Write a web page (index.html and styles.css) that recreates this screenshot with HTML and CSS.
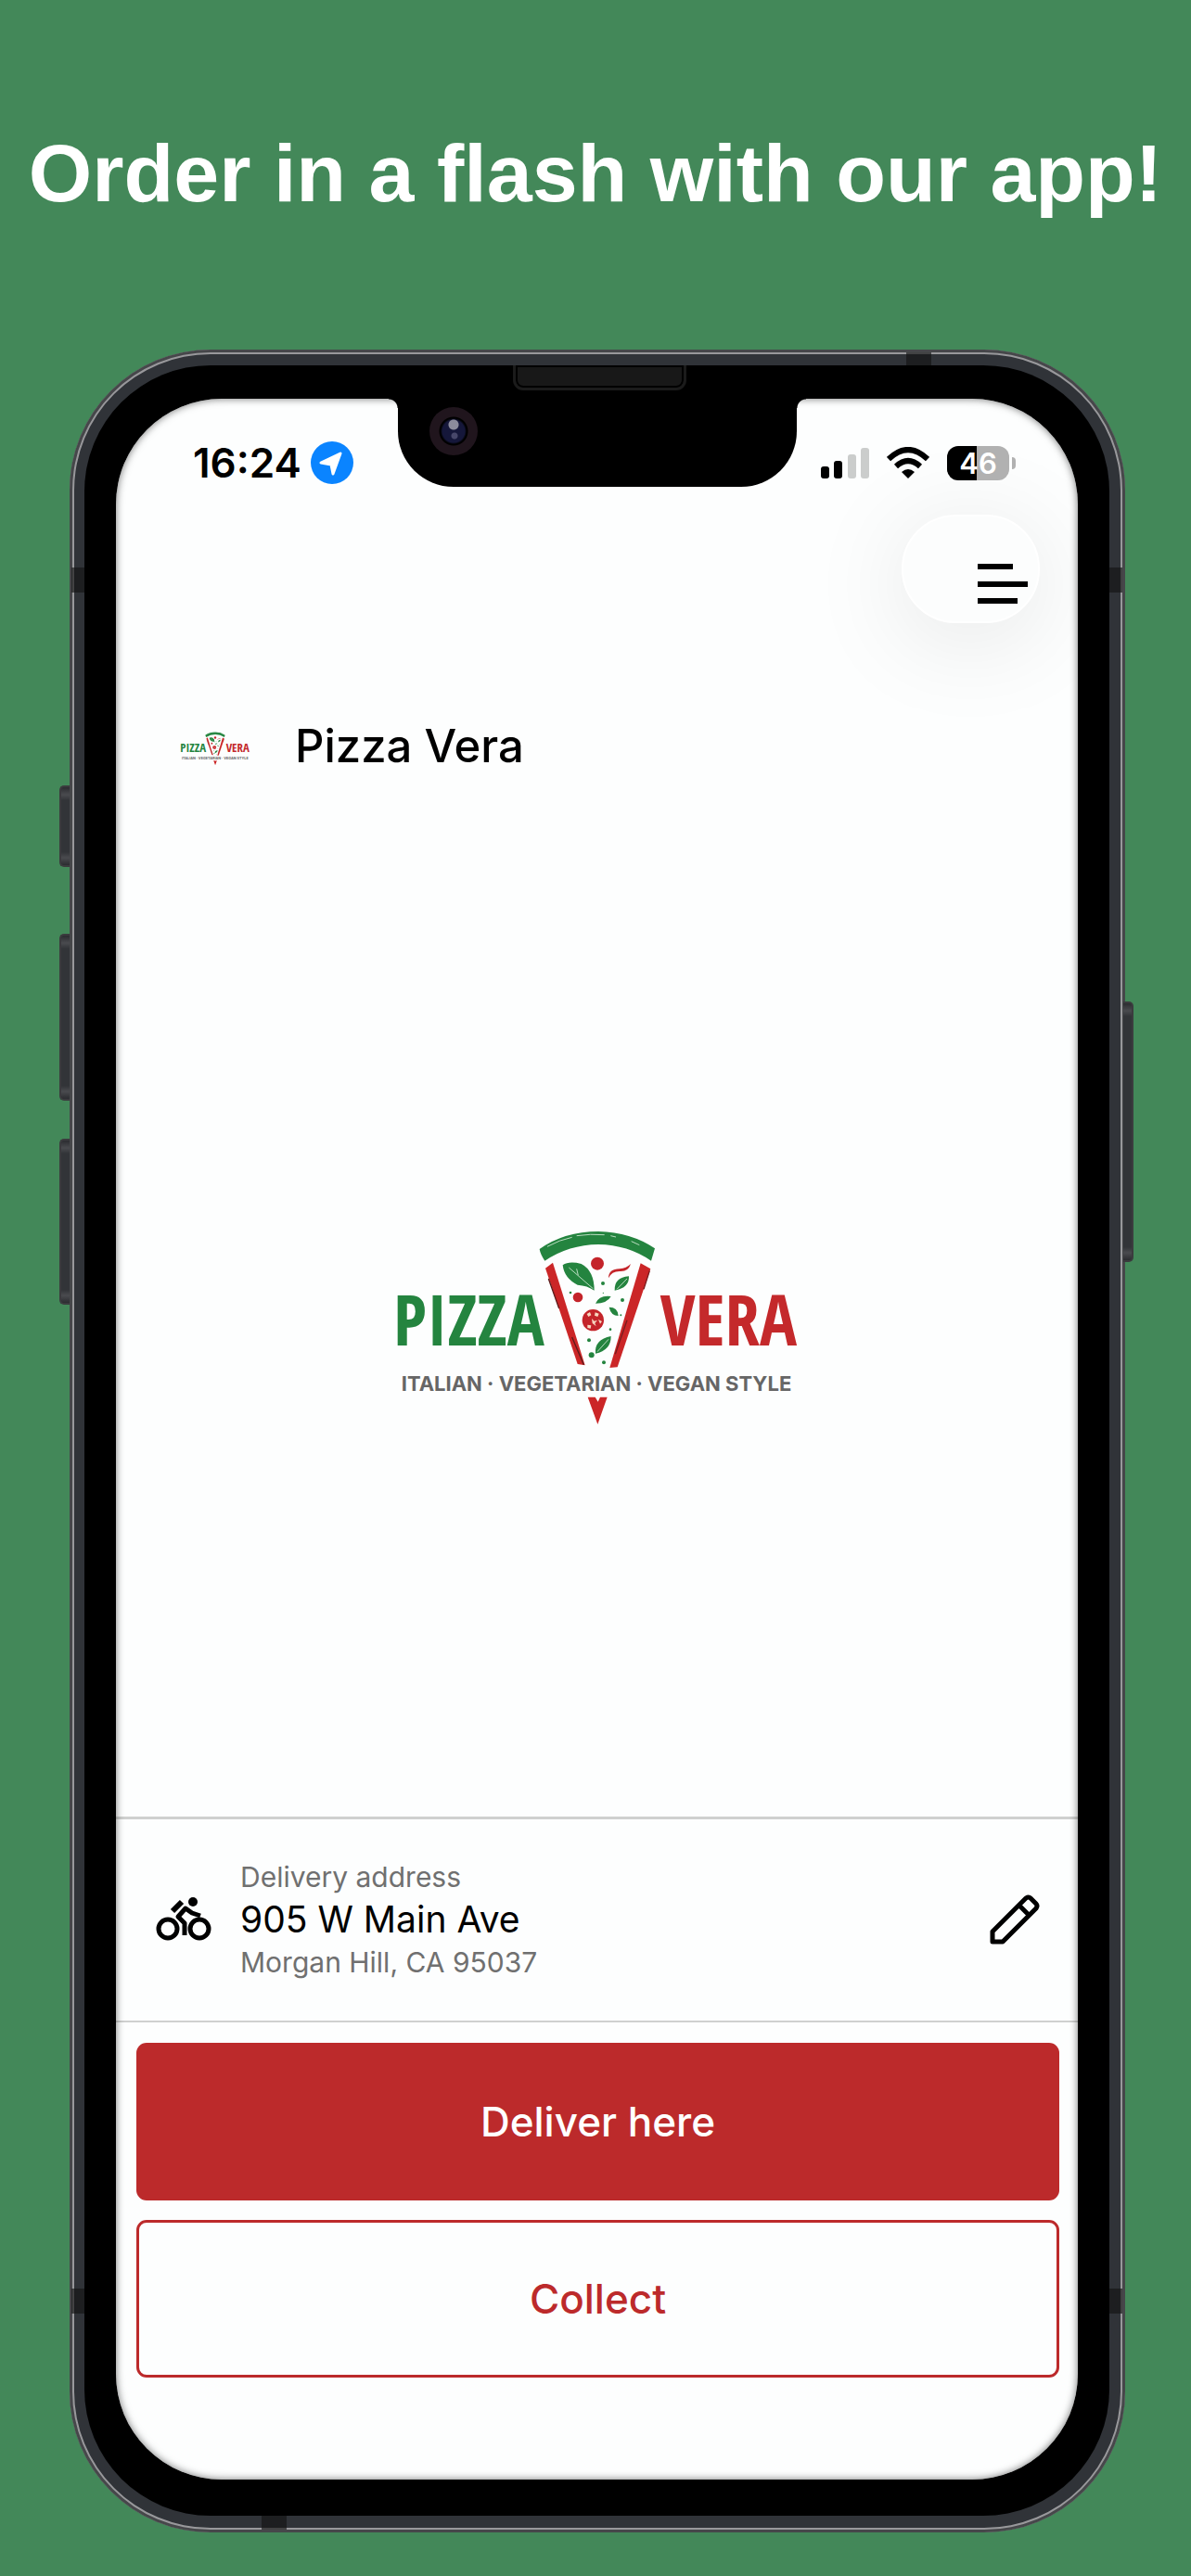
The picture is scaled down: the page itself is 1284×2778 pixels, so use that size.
FILE: index.html
```html
<!DOCTYPE html>
<html lang="en">
<head>
<meta charset="utf-8">
<meta name="viewport" content="width=device-width, initial-scale=1">
<title>Pizza Vera</title>
<link rel="stylesheet" href="styles.css">
</head>
<body>
<svg class="defs" aria-hidden="true">
  <defs>
    <symbol id="logo" viewBox="0 0 1440 720">
      <!-- crust -->
      <path fill="#24843f" d="M545 120Q625 63 735 63Q842 66 918 118L906 158Q830 106 735 105Q640 106 562 158Q548 138 545 120Z"/>
      <path fill="none" stroke="#b9dcbf" stroke-width="3" d="M570 112Q610 90 650 82M665 77Q710 70 755 74M775 77L792 81M842 95L868 107"/>
      <!-- slice sides -->
      <path fill="#cb2627" d="M564 182L588 164L692 496L668 492Z"/>
      <path fill="none" stroke="#5d1b1b" stroke-width="4" d="M574 216L608 312M650 405L688 494"/>
      <path fill="#cb2627" d="M872 166L904 184L797 502L772 504Z"/>
      <path fill="none" stroke="#7a1c1e" stroke-width="4" d="M901 190L882 250M828 350L790 460"/>
      <!-- leaves -->
      <path fill="#24843f" d="M620 172Q640 158 680 168Q722 190 722 254Q700 238 668 236Q625 215 620 172ZM788 254Q786 212 834 208Q836 246 788 254ZM726 296Q738 268 776 273Q764 296 726 296ZM770 308Q798 308 800 336Q776 336 770 308ZM726 458Q722 412 776 402Q776 448 726 458Z"/>
      <path fill="none" stroke="#b9dcbf" stroke-width="3" d="M640 180L718 248M665 184L670 205M795 250L828 216M732 452L768 412"/>
      <!-- toppings -->
      <g fill="#c4242a">
        <circle cx="732" cy="167" r="21"/>
        <circle cx="669" cy="276" r="16"/>
        <circle cx="718" cy="350" r="35"/>
        <path d="M768 214Q768 184 804 184Q826 182 840 168Q832 194 804 192Q778 192 768 214Z"/>
      </g>
      <path fill="#f7d7c0" d="M698 330l10-6 4 10-9 5zM725 325l12 4-4 10-10-4zM700 365l12 2-2 10-10-2zM735 348l12 6-6 8zM714 345l8 8 10-3-8 10 4 10-12-10z"/>
      <g fill="#24843f">
        <circle cx="750" cy="231" r="6"/><circle cx="645" cy="261" r="4"/><circle cx="813" cy="285" r="6"/>
        <circle cx="705" cy="415" r="6"/><circle cx="774" cy="380" r="4"/><circle cx="753" cy="487" r="6"/>
        <circle cx="713" cy="463" r="9"/><circle cx="808" cy="334" r="3"/><circle cx="751" cy="262" r="2"/>
      </g>
      <path fill="#cb2627" d="M701 599L725 599L734 614L741 599L764 599L733 687Z"/>
    </symbol>
  </defs>
</svg>

<main class="promo">
  <h1 class="headline">Order in a flash with our app!</h1>

  <div class="phone">
    <span class="key key-mute"></span>
    <span class="key key-up"></span>
    <span class="key key-down"></span>
    <span class="key key-power"></span>
    <span class="band band-lt"></span>
    <span class="band band-rt"></span>
    <span class="band band-lb"></span>
    <span class="band band-rb"></span>
    <span class="band band-top"></span>
    <span class="band band-bottom"></span>

    <div class="bezel">
      <div class="speaker"></div>
      <div class="screen">
        <div class="notch"><span class="camera"></span></div>

        <div class="status">
          <div class="clock">
            <time>16:24</time>
            <svg width="46" height="46" viewBox="0 0 46 46" aria-hidden="true"><circle cx="23" cy="23" r="23" fill="#0a84ff"/><path d="M11 23L32 13L24 35L22 25Z" fill="#fff" stroke="#fff" stroke-width="3" stroke-linejoin="round"/></svg>
          </div>
          <div class="indicators">
            <svg width="52" height="34" viewBox="0 0 52 34" aria-hidden="true"><rect y="21" width="9" height="13" rx="3"/><rect x="14" y="15" width="9" height="19" rx="3"/><rect x="29" y="8" width="9" height="26" rx="3" fill="#cbcdcc"/><rect x="43" y="1" width="9" height="33" rx="3" fill="#cbcdcc"/></svg>
            <svg width="46" height="34" viewBox="0 0 46 34" aria-hidden="true"><path d="M23 34L16 27Q23 21 30 27Z"/><path fill="none" stroke="#000" stroke-width="6" d="M10 21Q23 9 36 21M2 13Q23 -7 44 13"/></svg>
            <span class="battery">46</span>
          </div>
        </div>

        <button class="menu" type="button" aria-label="Menu">
          <svg width="54" height="44" viewBox="0 0 54 44" aria-hidden="true"><path fill="none" stroke="#000" stroke-width="6" d="M0 4H38M0 23H54M0 41H43"/></svg>
        </button>

        <header class="brand">
          <svg class="brand-logo" viewBox="0 0 432 208" role="img" aria-label="Pizza Vera logo">
            <use href="#logo" x="-28" y="-7" width="480" height="240"/>
            <text class="word green" x="-4" y="137">PIZZA</text>
            <text class="word red" x="431" y="137" text-anchor="end">VERA</text>
            <text class="tag" x="215" y="186" text-anchor="middle">ITALIAN · VEGETARIAN · VEGAN STYLE</text>
          </svg>
          <h2 class="brand-name">Pizza Vera</h2>
        </header>

        <section class="hero">
          <svg class="hero-logo" viewBox="0 0 432 208" role="img" aria-label="Pizza Vera, Italian, vegetarian, vegan style">
            <use href="#logo" x="-28" y="-7" width="480" height="240"/>
            <text class="word green" x="-4" y="137">PIZZA</text>
            <text class="word red" x="431" y="137" text-anchor="end">VERA</text>
            <text class="tag" x="215" y="186" text-anchor="middle">ITALIAN · VEGETARIAN · VEGAN STYLE</text>
          </svg>
        </section>

        <section class="address">
          <svg width="60" height="48" viewBox="0 0 60 48" aria-hidden="true"><g fill="none" stroke="#000"><circle cx="13" cy="34" r="10" stroke-width="5"/><circle cx="47" cy="34" r="10" stroke-width="5"/><path stroke-width="5" stroke-linejoin="round" d="M48 20L39 17L32 12L24 21L31 28V41"/><path stroke-width="6" d="M18 15L28 5"/></g><circle cx="40" cy="5" r="5"/></svg>
          <div class="address-text">
            <p class="note">Delivery address</p>
            <p class="street">905 W Main Ave</p>
            <p class="note">Morgan Hill, CA 95037</p>
          </div>
          <button class="edit" type="button" aria-label="Edit address">
            <svg width="54" height="54" viewBox="0 0 54 54" aria-hidden="true"><path fill="none" stroke="#000" stroke-width="5" stroke-linejoin="round" d="M3 51V40L39 4Q42 2 44 4L50 10Q52 12 50 15L14 51ZM32 12L42 22"/></svg>
          </button>
        </section>

        <div class="actions">
          <button class="btn btn-solid" type="button">Deliver here</button>
          <button class="btn btn-outline" type="button">Collect</button>
        </div>
      </div>
    </div>
  </div>
</main>
</body>
</html>
```
FILE: styles.css
```css
* { box-sizing: border-box; }

body {
  margin: 0;
  background: #438859;
  color: #000;
  font-family: Inter, "Liberation Sans", sans-serif;
}

h1, h2, p { margin: 0; font-weight: 400; }

button {
  margin: 0;
  padding: 0;
  border: 0;
  background: none;
  font: inherit;
}

svg { display: block; flex: none; }

.defs { position: absolute; width: 0; height: 0; }

.promo {
  min-height: 100vh;
  display: flex;
  flex-direction: column;
  padding-bottom: 47px;
}

.headline {
  padding: 135px 0 138px;
  color: #fff;
  font: 700 88px/104px "Liberation Sans", Arial, sans-serif;
  text-align: center;
  white-space: nowrap;
}

/* Phone body: dark rim, light chamfer, graphite frame */
.phone {
  position: relative;
  flex: 1;
  display: flex;
  margin: 0 71px 0 75px;
  padding: 17px 17px 18px 16px;
  border-radius: 152px;
  background: #303338;
  box-shadow: inset 0 0 0 3px #46474a, inset 0 0 0 5px #98989b;
}

.bezel {
  position: relative;
  flex: 1;
  display: flex;
  padding: 36px 34px 39px;
  border-radius: 136px;
  background: #000;
}

.key {
  position: absolute;
  left: -11px;
  width: 11px;
  border: 2px solid #3b3b3e;
  border-right: 0;
  border-radius: 5px 0 0 5px;
  background: linear-gradient(#2b2c30, #4a4b4f 8px, #323438 14px, #323438 calc(100% - 14px), #4a4b4f calc(100% - 8px), #2b2c30);
}
.key-mute { top: 470px; height: 88px; }
.key-up { top: 630px; height: 180px; }
.key-down { top: 851px; height: 179px; }
.key-power {
  top: 703px;
  left: auto;
  right: -9px;
  height: 281px;
  border: 2px solid #3b3b3e;
  border-left: 0;
  border-radius: 0 5px 5px 0;
}

.band { position: absolute; background: rgba(20, 20, 20, .65); }
.band-lt, .band-rt { top: 235px; }
.band-lb, .band-rb { bottom: 236px; }
.band-lt, .band-rt, .band-lb, .band-rb { width: 15px; height: 27px; }
.band-lt, .band-lb { left: 2px; }
.band-rt, .band-rb { right: 3px; }
.band-top, .band-bottom { width: 27px; height: 15px; }
.band-top { top: 3px; right: 209px; }
.band-bottom { bottom: 3px; left: 207px; }

.speaker {
  position: absolute;
  top: 0;
  left: 50%;
  width: 187px;
  height: 27px;
  margin-left: -91px;
  border: 3px solid #1b1b1b;
  border-top: 0;
  border-radius: 0 0 11px 11px;
  background: #181818;
  box-shadow: inset 0 0 0 2px #000;
}

.screen {
  position: relative;
  flex: 1;
  display: flex;
  flex-direction: column;
  overflow: hidden;
  border-radius: 114px;
  background: #fdfefe;
}
.screen::after {
  content: "";
  position: absolute;
  inset: 0;
  border-radius: inherit;
  box-shadow: inset 0 0 9px rgba(0, 0, 0, .55);
  pointer-events: none;
}

.notch {
  position: absolute;
  z-index: 1;
  top: 0;
  left: 50%;
  width: 430px;
  height: 95px;
  margin-left: -215px;
  border-radius: 0 0 60px 60px;
  background: #000;
}
.notch::before, .notch::after {
  content: "";
  position: absolute;
  top: 0;
  width: 10px;
  height: 10px;
}
.notch::before { right: 100%; background: radial-gradient(circle at 0 100%, transparent 9px, #000 10px); }
.notch::after { left: 100%; background: radial-gradient(circle at 100% 100%, transparent 9px, #000 10px); }

.camera {
  position: absolute;
  top: 9px;
  left: 34px;
  width: 52px;
  height: 52px;
  border-radius: 50%;
  background:
    radial-gradient(circle at 26px 19px, #8c8c9c 5px, transparent 6px),
    radial-gradient(circle at 27px 31px, #47476a 3px, transparent 4px),
    radial-gradient(circle, #15173a 12px, #000 14px, #000 15px, #20151d 16px);
}

.status {
  display: flex;
  justify-content: space-between;
  align-items: center;
  height: 138px;
  padding: 0 74px 0 83px;
}
.clock, .indicators { display: flex; align-items: center; }
.clock { gap: 10px; font-size: 44px; line-height: 46px; font-weight: 600; }
.indicators { gap: 19px; }

.battery {
  position: relative;
  width: 67px;
  height: 37px;
  border-radius: 12px;
  background: linear-gradient(90deg, #000 32px, #b1b1b1 32px);
  color: #fff;
  font-size: 31px;
  line-height: 37px;
  font-weight: 600;
  text-align: center;
}
.battery::after {
  content: "";
  position: absolute;
  top: 12px;
  left: 70px;
  width: 4px;
  height: 13px;
  border-radius: 0 4px 4px 0;
  background: #b1b1b1;
}

.menu {
  align-self: flex-end;
  display: flex;
  justify-content: flex-end;
  width: 149px;
  height: 117px;
  margin: -13px 41px 0 0;
  padding: 50px 11px 0 0;
  border: 2px solid #fff;
  border-radius: 58px;
  background: #fcfdfd;
  box-shadow: 0 16px 110px rgba(0, 0, 0, .1);
}

.brand {
  display: flex;
  align-items: center;
  gap: 49px;
  height: 66px;
  margin: 100px 70px 0;
}
.brand-logo { width: 74px; height: 36px; overflow: visible; }
.brand-name { font-size: 49px; line-height: 66px; font-weight: 500; }

.hero {
  flex: 1;
  display: flex;
  justify-content: center;
  align-items: center;
  padding-top: 38px;
}
.hero-logo { width: 432px; height: 208px; overflow: visible; }

.word { font: 700 75px "Open Sans Condensed", "Open Sans", sans-serif; }
.green { fill: #24843f; }
.red { fill: #c4292b; }
.tag { font: 700 22px Inter, sans-serif; fill: #666; }

.address {
  display: flex;
  align-items: center;
  gap: 31px;
  height: 222px;
  padding: 0 41px 2px 43px;
  border-top: 3px solid #cfd0cf;
  border-bottom: 2px solid #cfd0cf;
}
.address-text { flex: 1; }
.note { color: #707070; font-size: 30px; line-height: 42px; }
.street { font-size: 39px; line-height: 50px; }

.actions {
  display: flex;
  flex-direction: column;
  gap: 21px;
  padding: 22px 20px 110px 22px;
}
.btn {
  height: 170px;
  border-radius: 11px;
  font-size: 44px;
  font-weight: 500;
}
.btn-solid { background: #bc2a2b; color: #fff; }
.btn-outline { border: 3px solid #bc2a2b; color: #bc2a2b; }
```
